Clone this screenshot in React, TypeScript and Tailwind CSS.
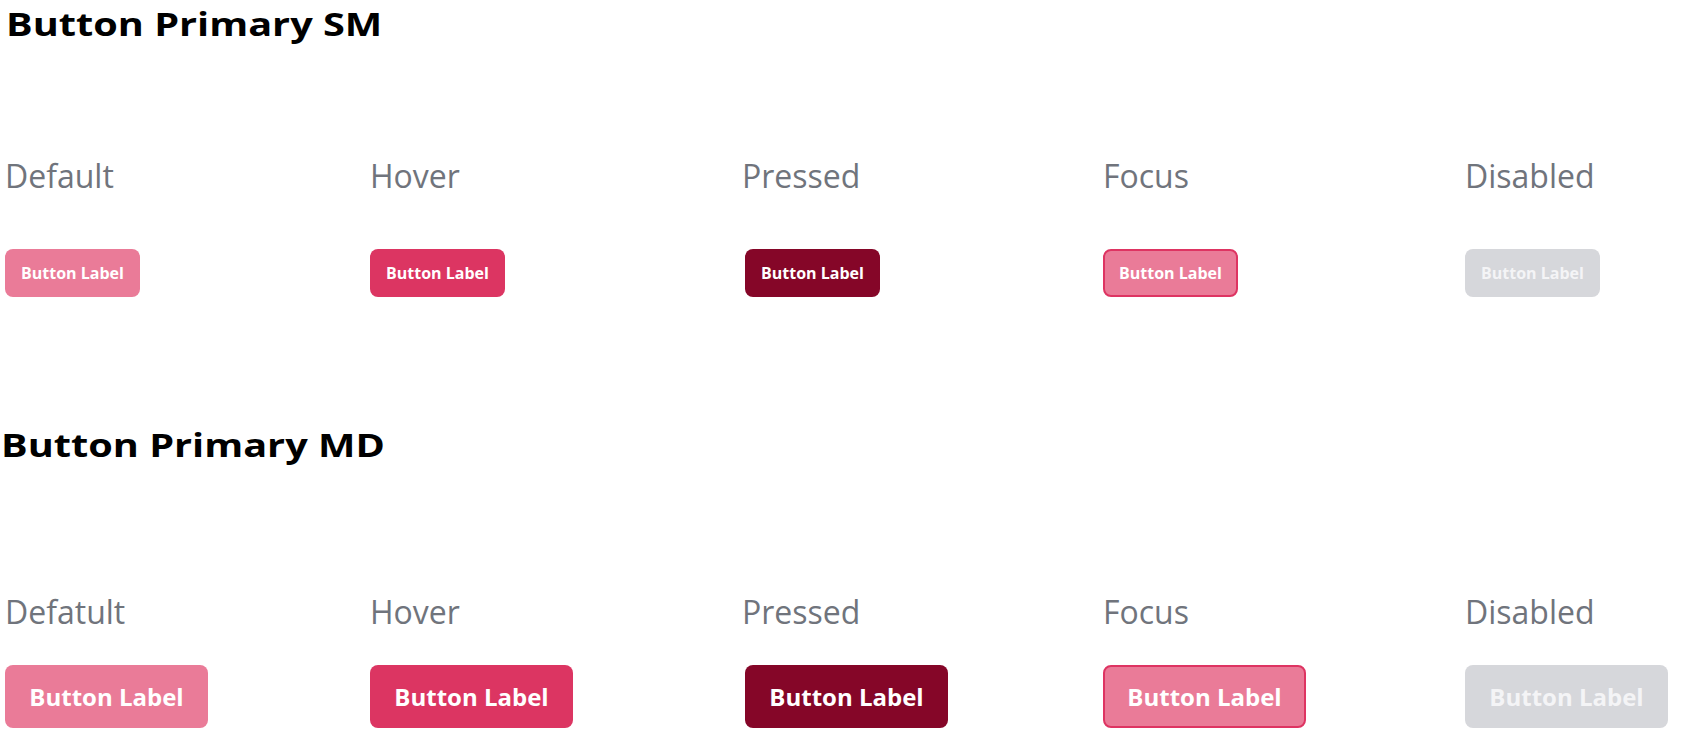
import React from "react";

type Variant = "default" | "hover" | "pressed" | "focus" | "disabled";

const variantClass: Record<Variant, string> = {
  default: "bg-[#ea7b98] text-white",
  hover: "bg-[#dc3562] text-white",
  pressed: "bg-[#850628] text-white",
  focus: "bg-[#ea7b98] text-white border-2 border-[#de3462]",
  disabled: "bg-[#d6d7db] text-[#f4f4f6]",
};

const labelOffset: Record<Variant, string> = {
  default: "",
  hover: "",
  pressed: "-ml-[3px]",
  focus: "",
  disabled: "",
};

const variants: Variant[] = ["default", "hover", "pressed", "focus", "disabled"];

const columns = "grid grid-cols-[365px_375px_358px_362px_1fr] pl-[5px]";

const ButtonSample: React.FC<{ variant: Variant; size: "sm" | "md" }> = ({ variant, size }) => {
  const sizeClass =
    size === "sm"
      ? "w-[135px] h-[48px] text-[16px] rounded-[8px]"
      : "w-[203px] h-[63px] text-[24px] rounded-[8px]";
  return (
    <button
      className={`${sizeClass} ${variantClass[variant]} font-bold flex items-center justify-center leading-none`}
    >
      Button Label
    </button>
  );
};

const Section: React.FC<{
  title: string;
  labels: string[];
  size: "sm" | "md";
  titleClass: string;
  labelsGap: string;
  buttonsGap: string;
}> = ({ title, labels, size, titleClass, labelsGap, buttonsGap }) => (
  <section>
    <div className={titleClass}>
      <h1 className="inline-block origin-left scale-x-[1.24] text-[32px] leading-[40px] font-bold text-black">
        {title}
      </h1>
    </div>
    <div className={`${columns} ${labelsGap}`}>
      {labels.map((l, i) => (
        <div key={l} className={`text-[32px] leading-[40px] text-[#70747c] ${labelOffset[variants[i]]}`}>
          {l}
        </div>
      ))}
    </div>
    <div className={`${columns} ${buttonsGap}`}>
      {variants.map((v) => (
        <div key={v}>
          <ButtonSample variant={v} size={size} />
        </div>
      ))}
    </div>
  </section>
);

export default function App() {
  return (
    <div
      className="w-[1691px] h-[729px] bg-white overflow-hidden pt-[4px]"
      style={{ fontFamily: '"Open Sans", "Noto Sans", sans-serif' }}
    >
      <Section
        title="Button Primary SM"
        labels={["Default", "Hover", "Pressed", "Focus", "Disabled"]}
        size="sm"
        titleClass="pl-[6px]"
        labelsGap="mt-[112px]"
        buttonsGap="mt-[53px]"
      />
      <div className="mt-[128px]">
        <Section
          title="Button Primary MD"
          labels={["Defatult", "Hover", "Pressed", "Focus", "Disabled"]}
          size="md"
          titleClass="pl-[1px]"
          labelsGap="mt-[127px]"
          buttonsGap="mt-[33px]"
        />
      </div>
    </div>
  );
}
